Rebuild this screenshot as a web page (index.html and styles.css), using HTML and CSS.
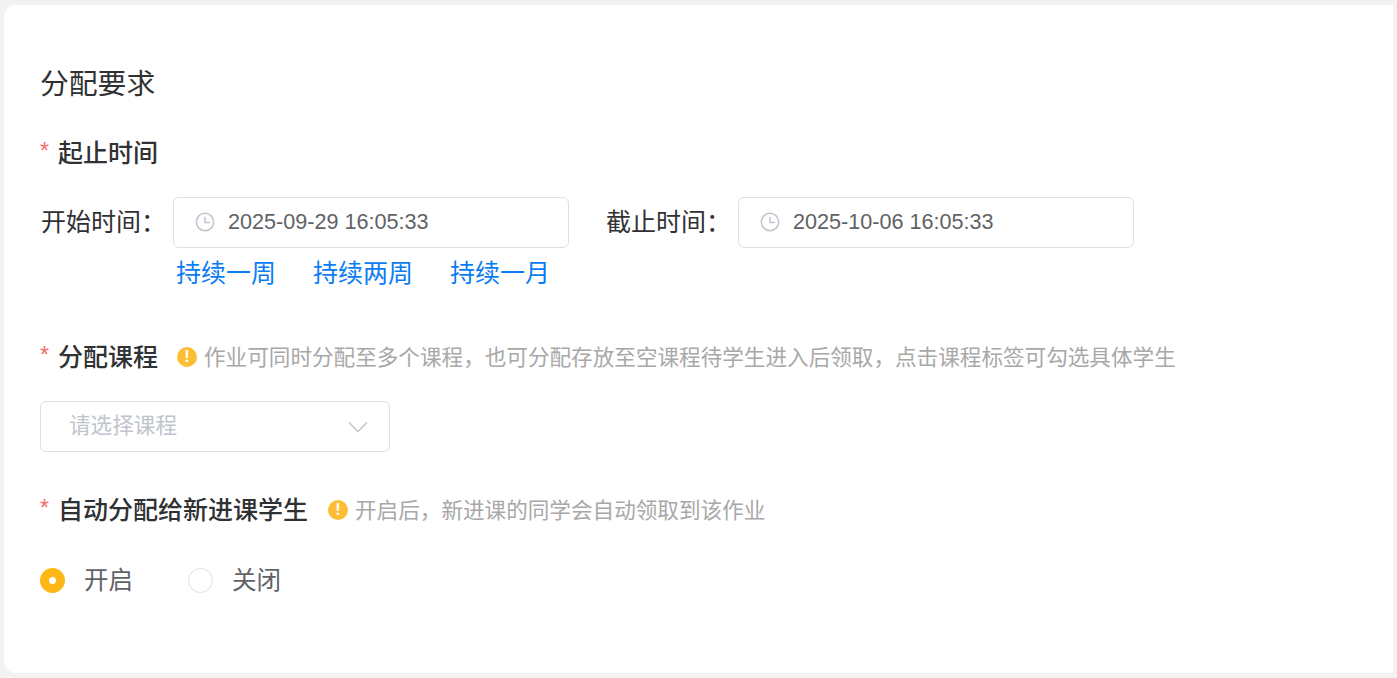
FILE: index.html
```html
<!DOCTYPE html>
<html lang="zh-CN">
<head>
    <meta charset="UTF-8">
    <title>分配要求</title>
    <link rel="stylesheet" href="styles.css">
</head>
<body>
    <div class="card">
        <h2 class="title">分配要求</h2>

        <div class="label-row row-time">
            <span class="star">*</span>
            <span class="label">起止时间</span>
        </div>

        <div class="time-row">
            <div class="time-field">
                <span class="time-label">开始时间：</span>
                <div class="date-box">
                    <svg class="clock" viewBox="0 0 20 20"><circle cx="10" cy="10" r="8.7"/><path d="M10 4.8V10.6H15"/></svg>
                    <span class="date-text">2025-09-29 16:05:33</span>
                </div>
            </div>
            <div class="time-field end-field">
                <span class="time-label">截止时间：</span>
                <div class="date-box">
                    <svg class="clock" viewBox="0 0 20 20"><circle cx="10" cy="10" r="8.7"/><path d="M10 4.8V10.6H15"/></svg>
                    <span class="date-text">2025-10-06 16:05:33</span>
                </div>
            </div>
        </div>

        <div class="quick-links">
            <a href="#">持续一周</a>
            <a href="#">持续两周</a>
            <a href="#">持续一月</a>
        </div>

        <div class="label-row row-course">
            <span class="star">*</span>
            <span class="label">分配课程</span>
            <span class="warn">!</span>
            <span class="hint">作业可同时分配至多个课程，也可分配存放至空课程待学生进入后领取，点击课程标签可勾选具体学生</span>
        </div>

        <div class="select-box">
            <span class="placeholder">请选择课程</span>
            <svg class="arrow" viewBox="0 0 20 12"><path d="M1 1.5L10 10.5L19 1.5"/></svg>
        </div>

        <div class="label-row row-auto">
            <span class="star">*</span>
            <span class="label">自动分配给新进课学生</span>
            <span class="warn warn-auto">!</span>
            <span class="hint">开启后，新进课的同学会自动领取到该作业</span>
        </div>

        <div class="radio-row">
            <label class="radio"><span class="dot on"></span><span class="radio-text">开启</span></label>
            <label class="radio"><span class="dot"></span><span class="radio-text">关闭</span></label>
        </div>
    </div>
</body>
</html>
```

FILE: styles.css
```css
/* General Styles */
html, body {
    height: 100%;
}

body {
    margin: 0;
    padding: 5px 4px;
    box-sizing: border-box;
    background-color: #f2f2f3;
    font-family: "Liberation Sans", "Noto Sans CJK SC", sans-serif;
    color: #303133;
}

.card {
    height: 668px;
    box-sizing: border-box;
    background-color: white;
    border-radius: 12px 0 0 12px;
    padding: 61px 36px 0 36px;
    overflow: hidden;
}

.title {
    margin: 0;
    font-size: 28.8px;
    font-weight: 400;
    line-height: 36px;
    height: 36px;
}

/* Label rows */
.label-row {
    display: flex;
    align-items: center;
    height: 36px;
}

.row-time {
    margin-top: 31px;
}

.row-course {
    margin-top: 46px;
}

.row-auto {
    margin-top: 38px;
}

.star {
    color: #f56c6c;
    font-size: 23px;
    width: 18px;
    flex-shrink: 0;
}

.label {
    font-size: 25px;
    font-weight: 500;
}

.warn {
    width: 20px;
    height: 20px;
    margin: 4px 7px 0 19px;
    border-radius: 50%;
    background-color: #fdbe36;
    color: white;
    font-size: 16px;
    font-weight: 700;
    line-height: 20px;
    text-align: center;
    flex-shrink: 0;
}

.warn-auto {
    margin-left: 20px;
}

.hint {
    font-size: 21.6px;
    color: #a8a8a8;
}

/* Date fields */
.time-row {
    display: flex;
    margin-top: 28px;
}

.time-field {
    display: flex;
    align-items: center;
    margin-left: 1px;
}

.end-field {
    margin-left: 37px;
}

.time-label {
    width: 132px;
    padding-bottom: 5px;
    font-size: 25px;
    white-space: nowrap;
}

.date-box {
    display: flex;
    align-items: center;
    width: 396px;
    height: 51px;
    box-sizing: border-box;
    padding-left: 21px;
    border: 1px solid #dcdfe6;
    border-radius: 6px;
    font-size: 21.6px;
    color: #606266;
}

.date-text {
    padding-bottom: 2px;
}

.clock {
    width: 20px;
    height: 20px;
    margin: 0 13px 2px 0;
    fill: none;
    stroke: #c0c4cc;
    stroke-width: 1.5;
}

.quick-links {
    display: flex;
    gap: 37px;
    margin: 7px 0 0 136px;
    line-height: 36px;
}

.quick-links a {
    color: #0a7cf5;
    font-size: 25px;
    text-decoration: none;
}

/* Course select */
.select-box {
    display: flex;
    align-items: center;
    justify-content: space-between;
    width: 350px;
    height: 51px;
    box-sizing: border-box;
    margin-top: 28px;
    padding: 0 21px 0 28px;
    border: 1px solid #dcdfe6;
    border-radius: 6px;
    font-size: 21.6px;
    color: #c0c4cc;
}

.placeholder {
    padding-bottom: 6px;
}

.arrow {
    width: 20px;
    height: 12px;
    fill: none;
    stroke: #c0c4cc;
    stroke-width: 1.5;
}

/* Radios */
.radio-row {
    display: flex;
    gap: 55px;
    margin-top: 35px;
}

.radio {
    display: flex;
    align-items: center;
    gap: 19px;
    font-size: 24.5px;
    color: #606266;
    line-height: 36px;
}

.radio-text {
    padding-top: 2px;
}

.dot {
    width: 25px;
    height: 25px;
    box-sizing: border-box;
    border: 1px solid #dcdfe6;
    border-radius: 50%;
    background-color: white;
}

.dot.on {
    border: 9px solid #ffb716;
}
```
